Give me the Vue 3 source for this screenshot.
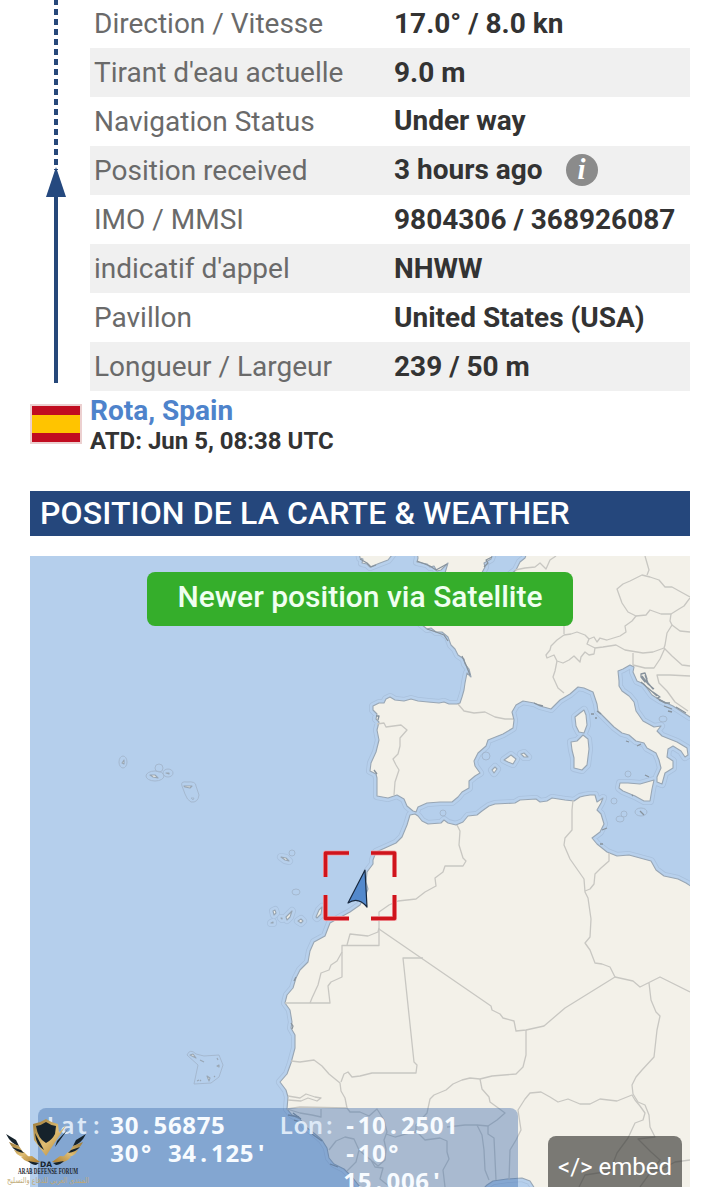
<script setup>
const rows = [
  { label: 'Direction / Vitesse', value: '17.0° / 8.0 kn' },
  { label: "Tirant d'eau actuelle", value: '9.0 m' },
  { label: 'Navigation Status', value: 'Under way', raised: true },
  { label: 'Position received', value: '3 hours ago', info: true, raised: true },
  { label: 'IMO / MMSI', value: '9804306 / 368926087' },
  { label: "indicatif d'appel", value: 'NHWW' },
  { label: 'Pavillon', value: 'United States (USA)' },
  { label: 'Longueur / Largeur', value: '239 / 50 m' }
]

const position = [
  { key: 'Lat:', name: 'lat', lines: ['30.56875', "30° 34.125'"] },
  { key: 'Lon:', name: 'lon', lines: ['-10.2501', '-10°', "15.006'"] }
]

const land = [
  // British Isles and the near channel shore
  'M359 550 L360 558 363 559 362 563 367 564 370 567 380 563 388 560 392 555 393 550Z',
  'M417 550 L418 558 417 562 422 563 427 564 430 567 434 566 437 571 441 570 448 563 445 573 443 580 478 580 485 567 484 563 491 559 494 550Z',
  // Europe
  'M528 550 L525 558 520 562 516 570 500 583 480 592 430 610 421 624 427 629 431 628 436 632 442 632 448 637 451 645 455 649 458 655 464 659 465 664 469 669 471 677 467 673 465 683 464 690 462 697 460 703 457 704 449 704 444 702 439 703 428 702 418 701 411 699 404 701 395 700 390 697 386 699 384 703 379 703 373 706 373 710 377 714 376 719 379 722 377 730 379 740 376 752 371 763 370 771 376 774 377 778 377 796 388 798 397 795 404 799 407 806 413 811 416 812 418 807 427 803 440 802 452 802 458 797 462 792 469 788 469 781 475 776 480 773 475 766 474 761 478 753 486 746 488 740 498 736 503 734 513 728 514 720 512 712 516 705 523 701 534 703 540 706 551 709 560 700 570 694 578 687 584 688 593 692 597 704 598 711 607 720 614 727 622 733 629 735 636 741 644 743 647 748 656 753 659 760 661 768 657 777 657 782 662 784 665 773 673 768 673 761 667 757 668 749 673 746 681 751 685 757 688 755 687 748 677 742 662 736 657 731 661 726 654 727 643 721 636 711 634 702 629 696 622 691 619 686 619 681 618 671 623 669 630 665 634 667 633 672 637 681 644 684 652 695 660 700 673 706 690 717 700 717 700 550Z',
  // Africa
  'M415 814 L410 815 407 825 402 837 396 843 385 848 376 852 373 860 373 864 367 872 366 882 368 889 365 896 360 905 350 912 339 918 330 923 325 936 314 942 310 951 308 962 300 970 296 978 293 988 287 995 285 1003 290 1010 292 1022 291 1028 295 1035 295 1048 291 1063 287 1074 280 1082 286 1090 288 1097 287 1109 292 1115 300 1119 306 1127 315 1134 322 1140 327 1148 329 1158 334 1164 344 1169 352 1177 364 1192 480 1192 487 1185 493 1181 507 1179 522 1178 530 1181 537 1192 700 1192 700 892 686 883 678 879 664 876 656 870 651 861 640 858 629 855 617 856 607 852 602 848 597 844 592 838 600 832 604 824 601 814 597 810 601 803 603 798 597 802 595 795 590 795 584 796 580 797 574 801 565 800 552 798 547 801 540 802 536 799 520 800 515 803 495 804 489 806 482 811 477 815 468 816 463 822 456 825 448 823 444 820 441 823 428 824 422 821 418 816Z',
  // Corsica, Sardinia, Sicily
  'M575 717 L580 713 584 710 586 715 587 725 584 733 579 732 576 726Z',
  'M571 742 L577 741 583 735 588 739 589 749 587 765 582 770 574 768 574 758 572 750Z',
  'M620 783 L628 783 640 784 654 780 652 789 650 801 644 801 635 796 623 791 619 788Z',
  // Balearics
  'M504 760 L511 755 516 759 513 764 508 762Z',
  'M492 770 L495 767 497 769 494 773Z',
  'M521 754 L524 753 528 757 524 757Z',
  // Canaries
  'M273 911 l2 -1 1 3 -2 2Z',
  'M286 917 l3 -3 3 -3 -2 6 -3 3Z',
  'M298 921 l3 -2 2 2 -2 2Z',
  'M316 917 l3 -7 3 -3 -1 7 -4 4Z',
  'M271 923 l2 -1 0 1Z',
  'M281 918 l1 0 0 1Z',
  // Madeira
  'M281 857 l5 1 3 3 -4 -1Z'
]

// Azores and Cape Verde sit inside shared reef outlines
const islets = [
  'M122 763 l2 -3 0 4Z',
  'M150 775 l5 0 3 3 -5 -1Z',
  'M166 773 l3 0 0 1Z',
  'M184 786 l8 0 -2 2 -5 -1Z',
  'M190 1055 l3 -1 3 4Z',
  'M200 1060 l4 2',
  'M217 1058 l1 2',
  'M217 1066 l2 -1 0 2Z',
  'M207 1076 l3 2 -1 3Z',
  'M197 1081 l2 -1 M200 1080 l1 1 M214 1077 l1 -1'
]

const borders = [
  // Portugal, Pyrenees
  'M377 724 L384 723 386 727 401 725 407 730 400 738 400 746 398 754 393 759 396 765 399 770 395 782 394 795',
  'M458 704 L464 711 474 713 485 712 495 717 505 719 513 719',
  // Low countries and central Europe
  'M515 570 L525 568 535 567 540 563 546 569 550 560 556 556',
  'M564 626 V634 M564 635 L571 634 577 632 585 635 589 639 594 637 597 642 600 638 607 640 620 636 626 632 625 626 632 621 636 616 628 612 622 603 617 589 623 584 630 581 636 578 642 575 650 577 659 580 665 587 672 587 681 592 690 597',
  'M645 556 L649 570 647 575',
  'M636 616 L646 615 650 610 661 614 671 614 679 609 684 606 690 598',
  'M671 614 L670 621 672 625 667 633 665 645 664 648 653 652 643 653 625 650 616 645 603 647 595 648 594 654 589 655 585 652 581 657 580 662 574 656 569 660 563 663 557 661 554 655 547 658 546 655 550 650 551 646 557 640 564 635',
  'M589 639 L587 644 595 648 M557 661 L555 671 553 677 558 688 564 693 M672 625 L680 631 690 632',
  'M664 648 L672 656 682 665 690 666 M633 653 L633 665 645 668 654 668 660 659 665 648',
  'M690 676 L670 675 657 675 659 683 667 691 675 702 688 711',
  // Maghreb
  'M457 825 L460 831 459 845 463 858 466 861 463 866 445 866 443 872 435 878 436 886 425 892 416 899 398 901 389 905 379 912 V945.5 H342 V977 L331 982 328 986 330 1003 H285',
  'M379 928 L378 932 368 936 350 934 347 945 M342 952 L337 961 331 965 329 970 321 973 318 985 312 998 310 1003',
  'M379 929 L491 1006 492 1010 500 1014 503 1018 514 1021 516 1031 526 1030 544 1026 565 1008 615 977 610 967 602 964 595 963 590 950 585 943 590 937 591 919 588 898 585 892 584 879 570 859 564 845 565 838 572 830 572 810 573 800',
  'M609 853 L609 861 601 868 595 874 594 884 590 889 585 891',
  'M423 958 H403 L414 1062 417 1065 416 1073 H372 L360 1076 352 1077 348 1072 344 1074 341 1082',
  // West Africa
  'M291 1061 L300 1062 314 1060 322 1066 329 1074 340 1083 341 1091 345 1098 347 1108',
  'M287 1109 L300 1107 347 1108 350 1112 360 1112 369 1116 377 1109 384 1120 387 1132 384 1140 386 1149 385 1160 378 1166 372 1161',
  'M288 1096 L300 1098 306 1094 315 1097 321 1098 317 1101 308 1098 301 1101 288 1100',
  'M287 1109 L300 1113 312 1115 321 1117 321 1109',
  'M329 1150 L336 1141 345 1137 354 1139 359 1150 356 1162 347 1171 M359 1150 L367 1157 371 1160 375 1167 383 1168 380 1179 390 1187',
  'M386 1134 L395 1137 409 1133 416 1132 416 1125 427 1113 430 1099 434 1095 446 1090 453 1084 462 1080 470 1078 480 1079 492 1076 516 1074 523 1067 526 1055 V1030',
  'M418 1133 L425 1140 440 1138 447 1141 447 1152 449 1159 443 1170 445 1187 M447 1127 L465 1125 477 1125 488 1126 497 1120 505 1113 501 1110 490 1102 489 1097 482 1089 480 1079',
  'M477 1125 L482 1135 484 1150 485 1170 489 1180 M488 1126 L488 1134 494 1138 496 1180 M509 1180 L510 1150 516 1140 521 1130 518 1110 525 1099 530 1093 541 1092 550 1097 558 1102 568 1099 580 1104 590 1104 600 1099 617 1101 632 1095 635 1100 640 1106 645 1113 643 1120 635 1123 628 1138 617 1153 610 1171 598 1173 585 1175 579 1187',
  // Niger, Chad, Libya
  'M615 977 L633 981 640 987 660 977 690 992 M649 983 L651 1000 656 1012 660 1016 657 1030 654 1057 642 1070 636 1077 632 1085 633 1094 638 1102 645 1105 649 1115 650 1127 655 1137 638 1139 651 1152 660 1160 650 1173 640 1187 M690 1160 L675 1162 660 1170 645 1172'
]

// broken shores too small to fill
const shoals = [
  'M641 674 l4 -1 2 6 -2 3 -4 -5Z M642 676 l6 8 6 5 M641 682 l9 8 4 3 M645 675 l3 8 5 6 M653 692 l7 5 -3 1 9 5 M648 688 l9 8 M659 700 l6 3 5 0 M664 706 l8 3 M668 711 l4 1 M676 707 l10 6',
  'M632 795 l1 1 M640 811 l4 4 M602 830 l5 -2 M600 844 l3 0 M591 714 l3 0 M595 718 l2 0 M626 741 l3 1 M637 746 l4 -2 M645 775 l4 2 M534 703 l5 2 4 1 M597 711 l4 3',
  'M360 559 l7 4 4 4 5 -2 M417 561 l13 5 6 4 11 -6 M484 567 l4 -4 -2 -3 6 -3 M427 629 l9 3 8 3 4 6 M462 656 l4 9 4 10',
  'M376 716 l3 0 -1 4 M374 770 l3 4 M291 1023 l2 3 -1 3 M296 977 l-2 4 M293 1113 l8 6 M312 1134 l10 7',
  'M288 1115 l11 2 M294 1120 l7 2 M330 1164 l8 3'
]

const reefs = [
  { x: 486, y: 756, rx: 4, ry: 4 },
  { x: 443, y: 813, rx: 3, ry: 3 },
  { x: 614, y: 801, rx: 3, ry: 3 },
  { x: 628, y: 774, rx: 3, ry: 3 },
  { x: 641, y: 812, rx: 6, ry: 4 },
  { x: 624, y: 814, rx: 3, ry: 3 },
  { x: 620, y: 819, rx: 4, ry: 3 },
  { x: 663, y: 719, rx: 4, ry: 3 },
  { x: 123, y: 762, rx: 4, ry: 6 },
  { x: 155, y: 776, rx: 9, ry: 5 },
  { x: 159, y: 768, rx: 4, ry: 4 },
  { x: 168, y: 773, rx: 5, ry: 4 },
  { x: 292, y: 853, rx: 3, ry: 3 },
  { x: 296, y: 892, rx: 4, ry: 3 }
]

const corners = 'M349 853 H325.5 V877 M371 853 H394.5 V877 M325.5 895 V918.5 H349 M394.5 895 V918.5 H371'
</script>

<template>
  <main class="page">
    <section class="voyage">
      <div class="rail">
        <svg width="60" height="390" viewBox="0 0 60 390">
          <path class="rail-dash" d="M26 -1 V170" />
          <path class="rail-line" d="M26 190 V383" />
          <path class="rail-head" d="M26 167 L36 197 H16Z" />
        </svg>
      </div>
      <dl class="details">
        <div v-for="row in rows" :key="row.label" class="row">
          <dt>{{ row.label }}</dt>
          <dd :class="{ raised: row.raised }">
            {{ row.value }}
            <span v-if="row.info" class="info">i</span>
          </dd>
        </div>
      </dl>
    </section>

    <section class="port">
      <div class="flag"></div>
      <div class="port-text">
        <a class="port-name">Rota, Spain</a>
        <span class="port-time">ATD: Jun 5, 08:38 UTC</span>
      </div>
    </section>

    <h2 class="heading">POSITION DE LA CARTE &amp; WEATHER</h2>

    <section class="map">
      <svg class="chart" width="660" height="631" viewBox="30 556 660 631">
        <path v-for="(d, i) in land" :key="'a' + i" class="halo-edge" :d="d" />
        <path v-for="(d, i) in land" :key="'b' + i" class="halo" :d="d" />
        <ellipse v-for="(r, i) in reefs" :key="'c' + i" class="reef" :cx="r.x" :cy="r.y" :rx="r.rx" :ry="r.ry" />
        <path class="reef" d="M182 786 Q180 781 187 782 Q196 781 196 786 L199 795 Q198 803 191 802 Q187 800 185 794Z M191 798 l3 0 -1 2Z" />
        <path class="reef" d="M187 1055 Q190 1048 196 1054 L204 1056 L219 1055 L223 1065 L219 1077 L211 1083 L194 1084 L198 1065Z" />
        <path v-for="(d, i) in land" :key="'d' + i" class="land" :d="d" />
        <path v-for="(d, i) in islets" :key="'g' + i" class="land" :d="d" />
        <path v-for="(d, i) in borders" :key="'e' + i" class="border" :d="d" />
        <path v-for="(d, i) in shoals" :key="'f' + i" class="shoal" :d="d" />
        <path class="target-glow" :d="corners" />
        <path class="target" :d="corners" />
        <path class="ship" d="M365 870 L348 903 Q358 896 367 907Z" />
      </svg>

      <div class="notice">Newer position via Satellite</div>

      <div class="coords">
        <template v-for="part in position" :key="part.name">
          <div class="key">
            <span v-for="(c, i) in part.key" :key="i" class="cell">{{ c }}</span>
          </div>
          <div class="num" :class="part.name">
            <div v-for="line in part.lines" :key="line">
              <span v-for="(c, i) in line" :key="i" class="cell">{{ c }}</span>
            </div>
          </div>
        </template>
      </div>

      <div class="embed">&lt;/&gt; embed</div>
    </section>

    <svg class="forum" width="92" height="70" viewBox="0 0 92 70">
      <defs>
        <linearGradient id="gold" x1="0" y1="0" x2="1" y2="1">
          <stop offset="0" stop-color="#9a7838" />
          <stop offset=".5" stop-color="#dfbd72" />
          <stop offset="1" stop-color="#a7792c" />
        </linearGradient>
      </defs>
      <path fill="url(#gold)" d="M46 1 Q52 5 58 6 L59 15 L67 6 L46 38 L34 22 L33 6 Q40 5 46 1Z" />
      <path fill="#15222b" d="M46 4 Q50 7 56 8 L55 16 Q52 22 46 25 Q38 21 36 8 Q42 7 46 4Z" />
      <path fill="#15222b" d="M35 15 L44 32 Q36 28 35 15Z M57 23 L68 11 L55 29Z" />
      <g v-for="side in 2" :key="side" :transform="side === 2 ? 'translate(92 0) scale(-1 1)' : undefined">
        <path fill="#15222b" d="M6 16 L16 22 L19 28 Q11 26 6 16Z" />
        <path fill="url(#gold)" d="M9 24 L19 28 L23 34 Q13 33 9 24Z M14 32 L24 34 L30 40 Q18 40 14 32Z M21 39 L32 38 L40 44 Q28 47 21 39Z" />
        <path fill="#15222b" d="M12 29 L21 32 L24 35 Q16 34 12 29Z M28 43 L39 45 L36 47 Q32 47 28 43Z" />
      </g>
      <text class="mark" x="46" y="48.5" text-anchor="middle">DA</text>
      <text class="forum-name" x="18" y="56" textLength="60" lengthAdjust="spacingAndGlyphs">ARAB DEFENSE FORUM</text>
      <text class="forum-arabic" x="48" y="64.5" text-anchor="middle" textLength="82" lengthAdjust="spacingAndGlyphs">المنتدى العربي للدفاع والتسليح</text>
    </svg>
  </main>
</template>

<style>
body {
  background: #fff;
  overflow: hidden;
}
</style>

<style scoped>
.page {
  position: relative;
  box-sizing: border-box;
  width: 720px;
  height: 1187px;
  padding: 0 30px;
  overflow: hidden;
  font-family: Roboto, sans-serif;
  color: #333;
}

.voyage {
  display: flex;
  height: 391px;
}

.rail {
  width: 60px;
}

.rail svg {
  display: block;
}

.rail-line,
.rail-dash {
  stroke: #26487a;
  stroke-width: 4;
}

.rail-dash {
  stroke-dasharray: 6 4;
}

.rail-head {
  fill: #25497f;
}

.details {
  flex: 1;
  margin: -1px 0 0;
}

.row {
  display: flex;
  height: 49px;
  font-size: 28px;
  line-height: 49px;
  white-space: nowrap;
}

.row:nth-child(even) {
  background: #f0f0f0;
}

dt {
  width: 300px;
  padding-left: 4px;
  color: #6a6a6a;
}

dd {
  display: flex;
  align-items: center;
  margin: 0;
  font-weight: 700;
}

.raised {
  height: 47px;
}

.info {
  width: 32px;
  height: 32px;
  margin-left: 23px;
  border-radius: 50%;
  background: #8b8b8b;
  color: #fff;
  font: italic 700 29px/30px "Liberation Serif", serif;
  text-align: center;
}

.port {
  display: flex;
  height: 100px;
}

.flag {
  box-sizing: border-box;
  width: 52px;
  height: 40px;
  margin: 13px 8px 0 0;
  border: 2px solid #ecd0d0;
  background: linear-gradient(#c10c20 9px, #ffc400 9px 27px, #c10c20 27px);
}

.port-text {
  display: flex;
  flex-direction: column;
  font-weight: 700;
}

.port-name {
  height: 34px;
  font-size: 28px;
  line-height: 39px;
  color: #4e83cb;
}

.port-time {
  font-size: 24px;
  line-height: 32px;
}

.heading {
  height: 45px;
  margin: 0 0 20px;
  padding-left: 10px;
  background: #25477c;
  color: #fff;
  font-size: 32px;
  font-weight: 500;
  line-height: 45px;
  letter-spacing: 0.11px;
  white-space: nowrap;
}

.map {
  position: relative;
  height: 631px;
  overflow: hidden;
  background: #b5cfec;
}

.chart {
  display: block;
}

.chart path {
  stroke-linejoin: round;
}

.halo-edge {
  fill: none;
  stroke: #a9c1dd;
  stroke-width: 8;
}

.halo {
  fill: #b5cfec;
  stroke: #b7d0ec;
  stroke-width: 6.4;
}

.land {
  fill: #f3f1e9;
  stroke: #98a6b4;
  stroke-width: 1.1;
}

.border {
  fill: none;
  stroke: #c8c7c2;
  stroke-width: 1.3;
}

.reef {
  fill: none;
  stroke: #a3b6cc;
  stroke-width: 0.9;
}

.shoal {
  fill: none;
  stroke: #87929c;
  stroke-width: 1.3;
}

.target {
  fill: none;
  stroke: #cf141c;
  stroke-width: 3.6;
}

.target-glow {
  fill: none;
  stroke: #f2a4a8;
  stroke-width: 5;
}

.ship {
  fill: #5389cc;
  stroke: #17283e;
  stroke-width: 1.2;
}

.notice {
  position: absolute;
  top: 16px;
  left: 117px;
  width: 426px;
  height: 54px;
  border-radius: 8px;
  background: #35ae2b;
  color: #effff0;
  font-size: 30px;
  font-weight: 500;
  line-height: 50px;
  text-align: center;
  white-space: nowrap;
}

.coords {
  position: absolute;
  top: 552px;
  left: 8px;
  display: flex;
  box-sizing: border-box;
  width: 480px;
  height: 100px;
  padding: 3px 0 0 8px;
  border-radius: 8px;
  background: rgba(58, 106, 169, 0.4);
  font: 700 24px/28px "Noto Sans", sans-serif;
  white-space: nowrap;
}

.cell {
  display: inline-block;
  width: 14.4px;
  text-align: center;
  white-space: pre;
}

.key {
  width: 64px;
  color: #dde9f7;
  font-weight: 600;
}

.num {
  color: #f7fbff;
}

.lat {
  width: 169px;
}

.embed {
  position: absolute;
  right: 8px;
  bottom: -12px;
  box-sizing: border-box;
  width: 134px;
  height: 63px;
  border-radius: 8px;
  background: rgba(51, 51, 48, 0.63);
  color: #fff;
  font-size: 24px;
  line-height: 63px;
  text-align: center;
}

.forum {
  position: absolute;
  top: 1118px;
  left: 0;
}

.mark {
  fill: #15222b;
  font: 700 7.5px "DejaVu Sans", sans-serif;
}

.forum-name {
  fill: #1b252e;
  font: 700 8px "Liberation Serif", serif;
}

.forum-arabic {
  fill: #c0aa76;
  font: 8px "DejaVu Sans", sans-serif;
}
</style>
